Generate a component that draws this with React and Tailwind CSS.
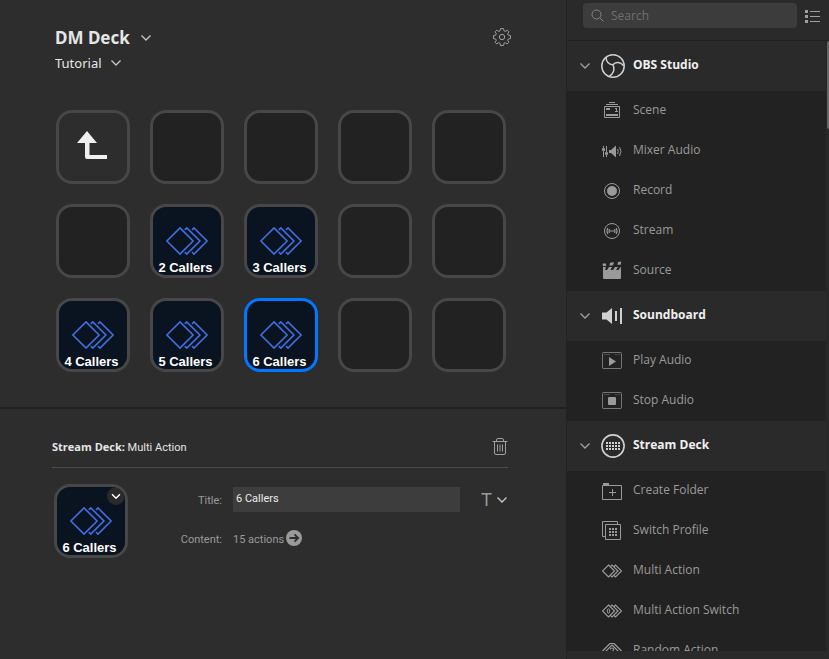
import React, { useState } from "react";

function Chevron({ className = "" }) {
  return (
    <svg viewBox="0 0 12 8" width="12" height="8" fill="none" stroke="currentColor" strokeWidth="1.3" className={className} aria-hidden="true">
      <path d="M1.5 1.5 6 6 10.5 1.5" />
    </svg>
  );
}

function Diamonds({ className = "" }) {
  return (
    <svg viewBox="0 0 42 28" fill="none" stroke="currentColor" className={className} aria-hidden="true">
      <path d="M14 .9 27.1 14 14 27.1.9 14Z" />
      <path d="M18.8 2.9 20.8.9 33.9 14 20.8 27.1 18.8 25.1" />
      <path d="M26 2.9 28 .9 41.1 14 28 27.1 26 25.1" />
    </svg>
  );
}

function Icon({ size = 20, children }) {
  return (
    <svg viewBox={`0 0 ${size} ${size}`} width={size} height={size} fill="none" stroke="currentColor" strokeWidth="1" aria-hidden="true">
      {children}
    </svg>
  );
}

const ObsIcon = () => (
  <Icon size={24}>
    <circle cx="12" cy="12" r="11.2" strokeWidth="1.5" />
    <path strokeWidth="1.5" d="M5.2 3.2C4.6 7.2 8 11 12 10.8M12 10.8C14.5 7.6 19.5 7.8 22.6 11.8M12 10.8C14.2 15 12.5 19.8 8.2 22.2" />
  </Icon>
);
const SoundboardIcon = () => (
  <Icon size={24}>
    <path fill="currentColor" stroke="none" d="M1 8.500h4.500L11 4v16l-5.500-4.500H1z" />
    <path strokeWidth="2" d="M15 7v10" />
    <path strokeWidth="2" d="M20 4v16" />
  </Icon>
);
const DeckIcon = () => (
  <Icon size={24}>
    <circle cx="12" cy="12" r="11.1" strokeWidth="1.600" />
    <path strokeWidth="2" strokeDasharray="2 1" d="M5 9h14M5 12h14M5 15h14" />
  </Icon>
);
const SceneIcon = () => (
  <Icon>
    <path d="M7 1.500h6M4 3.500h12" />
    <path d="M2.500 5.500h15v11h-15z" />
    <path strokeWidth="2" d="M4 8h4M4 14h12" />
    <path d="M13 7.500h2M14.500 7v4M13 10.500h3" />
  </Icon>
);
const MixerIcon = () => (
  <Icon>
    <path d="M1.500 5v2M1.500 10v6M4.500 5v6M4.500 14v2" />
    <path strokeWidth="2.500" d="M0 8.500h3M3 12.500h3" />
    <path fill="currentColor" stroke="none" d="M7 9h2l5-4.500v12L9 12H7z" />
    <path d="M15.500 8q1.500 2.500 0 5M17.500 6q3 4.500 0 9" />
  </Icon>
);
const RecordIcon = () => (
  <Icon>
    <circle cx="10" cy="10" r="7.500" />
    <circle cx="10" cy="10" r="5" fill="currentColor" stroke="none" />
  </Icon>
);
const StreamIcon = () => (
  <Icon>
    <circle cx="10" cy="10" r="7.500" />
    <path d="M8 10h4" />
    <path strokeWidth="1.200" d="M7.200 8v4M12.800 8v4M5.700 7Q4.200 10 5.700 13M14.300 7Q15.800 10 14.300 13" />
  </Icon>
);
const SourceIcon = () => (
  <Icon>
    <path fill="currentColor" stroke="none" d="M1 6h3l-1 3h2l2-3h3l-1.500 3h2.500l2-3h3l-2 3h2.500l2-3H19v11q0 1-1 1H2q-1 0-1-1z" />
    <path fill="currentColor" stroke="none" d="M.5 2.800 3.500 2.300l1 2.500-3.500.5zM8 1.800l4-.5-1 3-3.500.5zM16 1l3-.5v3l-3.500.5z" />
  </Icon>
);
const AudioFrame = ({ children }) => (
  <Icon>
    <rect x=".5" y="1.500" width="19" height="16" rx="1" opacity=".7" />
    <path stroke="#3d4a72" d="M2 3.500h6" />
    <path stroke="#68424a" d="M13 3.500h2M16 3.500h2" />
    {children}
  </Icon>
);
const PlayIcon = () => (
  <AudioFrame>
    <path fill="currentColor" stroke="none" d="M7 6v9l7-4.500z" />
  </AudioFrame>
);
const StopIcon = () => (
  <AudioFrame>
    <rect x="6" y="6" width="8" height="8" rx="1" fill="currentColor" stroke="none" />
  </AudioFrame>
);
const FolderIcon = () => (
  <Icon>
    <path d="M.5 4.500h19v14H.5z" />
    <path strokeWidth="2" d="M1 3h6" />
    <path d="M10.500 8v7M7 11.500h7" />
  </Icon>
);
const ProfileIcon = () => (
  <Icon>
    <path d="M3 15.500H.5V.5h15V3" />
    <path d="M3.500 3.500h15v15h-15z" />
    <path strokeWidth="2" strokeDasharray="2 1" d="M7 8h8M7 11h8M7 14h8" />
  </Icon>
);
const SmallDiamonds = ({ children }) => (
  <Icon>
    <g strokeWidth="1.200">
      <path d="M6.500 4 12.500 10 6.500 16 .5 10Z" />
      <path d="M8.500 5.500 10 4 16 10 10 16 8.500 14.500" />
      <path d="M12 5.500 13.500 4 19.500 10 13.500 16 12 14.500" />
    </g>
    {children}
  </Icon>
);
const MultiSwitchIcon = () => (
  <SmallDiamonds>
    <ellipse cx="6.500" cy="10" rx="1.200" ry="2.200" />
  </SmallDiamonds>
);
const RandomIcon = () => (
  <Icon>
    <path strokeWidth="1.200" d="M10 4 17 11 10 18 3 11Z" />
    <path strokeWidth="1.200" d="M8 2.500.5 10M12 2.500 19.500 10M8 2.500h4" />
    <path strokeWidth="1.200" d="M8.300 8.500Q8.500 7 10 7T11.700 8.500Q11.500 9.500 10 10.500V12" />
  </Icon>
);

const sections = [
  {
    name: "OBS Studio",
    icon: ObsIcon,
    items: [
      ["Scene", SceneIcon],
      ["Mixer Audio", MixerIcon],
      ["Record", RecordIcon],
      ["Stream", StreamIcon],
      ["Source", SourceIcon],
    ],
  },
  {
    name: "Soundboard",
    icon: SoundboardIcon,
    items: [
      ["Play Audio", PlayIcon],
      ["Stop Audio", StopIcon],
    ],
  },
  {
    name: "Stream Deck",
    icon: DeckIcon,
    items: [
      ["Create Folder", FolderIcon],
      ["Switch Profile", ProfileIcon],
      ["Multi Action", SmallDiamonds],
      ["Multi Action Switch", MultiSwitchIcon],
      ["Random Action", RandomIcon],
    ],
  },
];

const keys = [
  "back", "", "", "", "",
  "", "2 Callers", "3 Callers", "", "",
  "4 Callers", "5 Callers", "6 Callers", "", "",
];

function KeyFace({ label }) {
  return (
    <>
      <Diamonds className="mt-5 h-7 w-[42px] shrink-0 stroke-[1.6] text-[#3f6fe0]" />
      <span className="mt-1.5 pr-[3px] font-['Liberation_Sans',sans-serif] text-[13px] leading-[14px] font-bold whitespace-nowrap text-white">{label}</span>
    </>
  );
}

function DeckKey({ label, selected, onSelect }) {
  const base = "flex h-[74px] w-[74px] flex-col items-center overflow-hidden rounded-2xl border-[3px]";
  if (label === "back") {
    return (
      <button aria-label="Back" className={`${base} justify-center border-[#474747] bg-[#2d2d2d] pr-0.5 pb-1`}>
        <svg viewBox="0 0 30 28" width="30" height="28" aria-hidden="true">
          <path d="M10 0 20 12H12.500V24H30V28H10Q8 28 8 26V12H0Z" fill="#f0f0f0" />
        </svg>
      </button>
    );
  }
  if (!label) return <button aria-label="Empty key" className={`${base} border-[#474747] bg-[#222222]`} />;
  return (
    <button onClick={onSelect} className={`${base} bg-[#0a1320] ${selected ? "border-[#0078ff]" : "border-[#474747]"}`}>
      <KeyFace label={label} />
    </button>
  );
}

function Picker({ label, value, className }) {
  return (
    <span className="relative inline-flex items-center">
      <select aria-label={label} className={`h-6 appearance-none bg-transparent leading-6 outline-none ${className}`}>
        <option>{value}</option>
      </select>
      <Chevron className="pointer-events-none absolute right-0 text-[#c8c8c8]" />
    </span>
  );
}

function Section({ section }) {
  const [open, setOpen] = useState(true);
  const SectionIcon = section.icon;
  return (
    <section>
      <button onClick={() => setOpen(!open)} aria-expanded={open} className="flex h-[50px] w-full items-center bg-[#2a2a2a] pl-3 text-left">
        <Chevron className="text-[#a0a0a0]" />
        <span className="ml-2.5 text-[#d0d0d0]"><SectionIcon /></span>
        <span className="ml-2 pb-0.5 text-[12px] font-bold text-[#f0f0f0]">{section.name}</span>
      </button>
      {open && (
        <ul>
          {section.items.map(([name, ItemIcon]) => (
            <li key={name}>
              <button className="flex h-10 w-full items-center gap-[11px] pl-[35px] text-left text-[12px] text-[#9a9a9a]">
                <ItemIcon />
                <span className="pb-0.5">{name}</span>
              </button>
            </li>
          ))}
        </ul>
      )}
    </section>
  );
}

export default function App() {
  const [selected, setSelected] = useState(12);
  const [title, setTitle] = useState("6 Callers");
  return (
    <div className="flex h-screen overflow-hidden bg-[#2d2d2d] font-['Open_Sans','Noto_Sans',sans-serif] text-[#e6e6e6]">
      <main className="flex min-w-0 flex-1 flex-col">
        <div className="border-b-2 border-[#222222] pr-[55px] pb-[35px] pl-[55px]">
          <header className="flex items-start justify-between pt-[26px] font-['Noto_Sans',sans-serif]">
            <div className="flex flex-col items-start gap-px">
              <Picker label="Profile" value="DM Deck" className="pr-[22px] text-[17px] font-bold" />
              <Picker label="Page" value="Tutorial" className="pr-5 text-[13px]" />
            </div>
            <button aria-label="Settings" className="mt-0.5 text-[#a0a0a0]">
              <svg viewBox="0 0 18 18" width="18" height="18" fill="none" stroke="currentColor" aria-hidden="true">
                <path d="M7.500.6h3l.5 2.200 1.300.6 2-1.200 1.600 1.600-1.200 2 .6 1.300 2.200.5v3l-2.200.4-.6 1.300 1.200 2-1.600 1.600-2-1.200-1.300.6-.5 2.200h-3l-.5-2.200-1.300-.6-2 1.200-1.600-1.600 1.200-2-.6-1.300L.5 10.600v-3l2.200-.5.6-1.300-1.200-2 1.600-1.600 2 1.200L7 2.800z" strokeLinejoin="round" />
                <circle cx="9" cy="9" r="2.700" />
              </svg>
            </button>
          </header>
          <div className="mt-[35px] grid grid-cols-[repeat(5,74px)] gap-5 pl-px">
            {keys.map((label, i) => (
              <DeckKey key={i} label={label} selected={i === selected} onSelect={() => setSelected(i)} />
            ))}
          </div>
        </div>

        <section className="flex-1 pr-[58px] pl-[52px] font-[Roboto,sans-serif]">
          <div className="flex items-center justify-between border-b border-[#4a4a4a] pt-7 pb-[9px]">
            <h2 className="text-[11px] leading-5 text-[#e6e6e6]">
              <b className="font-['Open_Sans',sans-serif]">Stream Deck:</b> Multi Action
            </h2>
            <button aria-label="Delete" className="pb-0.5 text-[#a0a0a0]">
              <svg viewBox="0 0 16 17" width="16" height="17" fill="none" stroke="currentColor" aria-hidden="true">
                <path d="M.5 3.500h15M4.500 3.500V2q0-1.500 1.500-1.500h4q1.500 0 1.500 1.500v1.500" />
                <path d="M2.500 3.500V15q0 1.500 1.500 1.500h8q1.500 0 1.500-1.500V3.500M5.500 6.500v7M8 6.500v7M10.500 6.500v7" />
              </svg>
            </button>
          </div>
          <div className="flex items-start pt-4 pl-0.5">
            <div className="relative flex h-[74px] w-[74px] shrink-0 flex-col items-center overflow-hidden rounded-2xl border-[3px] border-[#474747] bg-[#0a1320]">
              <KeyFace label={title} />
              <button aria-label="Icon options" className="absolute top-0 right-0 flex h-[18px] w-[18px] items-center justify-center rounded-full bg-[#2a2a2a] text-white">
                <svg viewBox="0 0 10 7" width="10" height="7" fill="none" stroke="currentColor" strokeWidth="1.5" aria-hidden="true">
                  <path d="M1 1.200 5 5.200 9 1.200" />
                </svg>
              </button>
            </div>
            <div className="ml-6 grid flex-1 grid-cols-[70px_1fr] items-center gap-x-[11px] gap-y-4 pt-[3px] text-[11px] text-[#9a9a9a]">
              <label htmlFor="title" className="pt-1 text-right">Title:</label>
              <div className="flex items-center justify-between">
                <input id="title" value={title} onChange={(e) => setTitle(e.target.value)} className="h-[25px] w-[227px] bg-[#3d3d3d] px-[3px] pb-[3px] text-[#ececec] outline-none" />
                <button aria-label="Text style" className="flex items-center gap-1">
                  <span className="font-['Liberation_Sans',sans-serif] text-[18px] leading-6">T</span>
                  <Chevron className="text-[#c8c8c8]" />
                </button>
              </div>
              <span className="pt-1 text-right">Content:</span>
              <div className="flex items-center gap-0.5">
                <span className="pt-1">15 actions</span>
                <button aria-label="Open actions">
                  <svg viewBox="0 0 16 16" width="16" height="16" aria-hidden="true">
                    <circle cx="8" cy="8" r="8" fill="#9a9a9a" />
                    <path d="M3.500 8h8.500M8.500 4.300 12.200 8 8.500 11.700" fill="none" stroke="#2d2d2d" strokeWidth="1.800" />
                  </svg>
                </button>
              </div>
            </div>
          </div>
        </section>
      </main>

      <aside className="flex w-[263px] shrink-0 flex-col border-l border-[#222222] bg-[#2a2a2a]">
        <div className="flex items-start gap-2 border-b border-[#222222] pt-[3px] pr-2 pb-3 pl-4">
          <label className="flex h-[25px] flex-1 items-center gap-[7px] rounded-[4px] bg-[#3c3c3c] pl-2 text-[#858585]">
            <svg viewBox="0 0 13 13" width="13" height="13" fill="none" stroke="currentColor" aria-hidden="true">
              <circle cx="5.500" cy="5.500" r="4.500" />
              <path d="M8.800 8.800 12.500 12.500" />
            </svg>
            <input aria-label="Search" placeholder="Search" className="w-0 flex-1 bg-transparent text-[12px] outline-none placeholder:text-[#6f6f6f]" />
          </label>
          <button aria-label="List view" className="mt-[7px] text-[#a0a0a0]">
            <svg viewBox="0 0 16 13" width="16" height="13" stroke="currentColor" aria-hidden="true">
              <path strokeWidth="3" d="M0 1.500h3M0 6.500h3M0 11.500h3" />
              <path d="M5 1.500h10M5 6.500h10M5 11.500h10" />
            </svg>
          </button>
        </div>
        <div className="mb-2 flex min-h-0 flex-1">
          <div className="flex-1 overflow-y-auto bg-[#222222] [scrollbar-width:none]">
            {sections.map((s) => (
              <Section key={s.name} section={s} />
            ))}
          </div>
          <div className="w-[3px] bg-[#282828] pl-px">
            <div className="h-[88px] rounded-l bg-[#666666]" />
          </div>
        </div>
      </aside>
    </div>
  );
}
